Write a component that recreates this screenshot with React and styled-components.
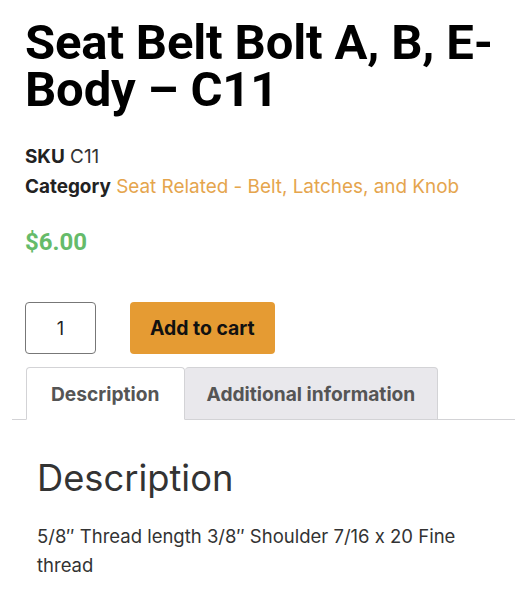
import React from "react";
import styled, { createGlobalStyle } from "styled-components";

const GlobalStyle = createGlobalStyle`
  body {
    margin: 0;
    background: #fff;
    font-family: Inter, "Noto Sans", sans-serif;
    font-feature-settings: "calt" 0;
    color: #333;
  }
`;

const Page = styled.div`
  width: 527px;
  padding-top: 19px;
`;

const Summary = styled.div`
  padding: 0 25px;
`;

const Title = styled.h1`
  margin: 0;
  font-family: Roboto, "Liberation Sans", sans-serif;
  font-weight: 700;
  font-size: 49px;
  line-height: 47px;
  color: #000;
  letter-spacing: -0.15px;
`;

const Meta = styled.div`
  margin-top: 29px;
  font-size: 18.9px;
  line-height: 30px;
  color: #333;
`;

const MetaLabel = styled.span`
  font-weight: 700;
  color: #222;
`;

const MetaLink = styled.a`
  color: #e5a54d;
  text-decoration: none;
`;

const Price = styled.p`
  margin: 25px 0 0;
  font-family: Roboto, "Liberation Sans", sans-serif;
  font-weight: 700;
  font-size: 24px;
  line-height: 30px;
  color: #66bb6a;
`;

const CartForm = styled.form`
  display: flex;
  gap: 34px;
  margin-top: 45px;
`;

const Qty = styled.input`
  box-sizing: border-box;
  width: 71px;
  height: 52px;
  border: 1px solid #777;
  border-radius: 4px;
  font-family: Inter, sans-serif;
  font-size: 18px;
  text-align: center;
  color: #222;
  padding: 0;
`;

const CartButton = styled.button`
  box-sizing: border-box;
  height: 52px;
  padding: 0 20px;
  border: none;
  border-radius: 4px;
  background: #e59b33;
  font-family: Inter, sans-serif;
  font-weight: 700;
  font-size: 19.4px;
  color: #111;
`;

const Tabs = styled.div`
  margin: 13px 12px 0;
`;

const TabList = styled.ul`
  display: flex;
  list-style: none;
  margin: 0;
  padding: 0 0 0 14px;
  border-bottom: 1px solid #d3d3d6;
`;

const Tab = styled.li`
  box-sizing: border-box;
  height: 53px;
  margin-bottom: -1px;
  padding: 0 ${(p) => (p.$active ? "24px" : "22px")};
  display: flex;
  align-items: center;
  border: 1px solid #d3d3d6;
  border-bottom-color: ${(p) => (p.$active ? "#fff" : "#d3d3d6")};
  border-left-width: ${(p) => (p.$active ? "1px" : "0")};
  border-radius: 4px 4px 0 0;
  background: ${(p) => (p.$active ? "#fff" : "#e9e8ec")};
  font-weight: 700;
  font-size: 19.2px;
  color: #555;
`;

const Panel = styled.div`
  padding: 34px 25px 0;
`;

const PanelTitle = styled.h2`
  margin: 0;
  font-weight: 400;
  font-size: 36.3px;
  line-height: 48px;
  color: #333;
`;

const PanelText = styled.p`
  margin: 20px 0 0;
  font-size: 18.5px;
  line-height: 29px;
  color: #333;
`;

export default function App() {
  return (
    <Page>
      <GlobalStyle />
      <Summary>
        <Title>Seat Belt Bolt A, B, E-Body – C11</Title>
        <Meta>
          <div>
            <MetaLabel>SKU</MetaLabel> C11
          </div>
          <div>
            <MetaLabel>Category</MetaLabel>{" "}
            <MetaLink href="#">Seat Related - Belt, Latches, and Knob</MetaLink>
          </div>
        </Meta>
        <Price>$6.00</Price>
        <CartForm onSubmit={(e) => e.preventDefault()}>
          <Qty type="text" defaultValue="1" />
          <CartButton type="submit">Add to cart</CartButton>
        </CartForm>
      </Summary>
      <Tabs>
        <TabList>
          <Tab $active>Description</Tab>
          <Tab>Additional information</Tab>
        </TabList>
        <Panel>
          <PanelTitle>Description</PanelTitle>
          <PanelText>
            5/8″ Thread length 3/8″ Shoulder 7/16 x 20 Fine thread
          </PanelText>
        </Panel>
      </Tabs>
    </Page>
  );
}
